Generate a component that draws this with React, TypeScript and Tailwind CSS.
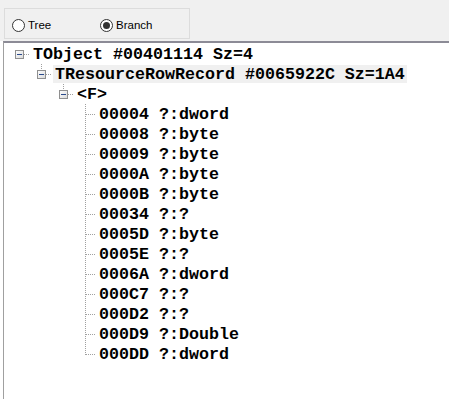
type Row = { text: string; level: number; last: boolean; box?: boolean; selected?: boolean }

const rows: Row[] = [
  { text: 'TObject #00401114 Sz=4', level: 0, last: true, box: true },
  { text: 'TResourceRowRecord #0065922C Sz=1A4', level: 1, last: true, box: true, selected: true },
  { text: '<F>', level: 2, last: true, box: true },
  { text: '00004 ?:dword', level: 3, last: false },
  { text: '00008 ?:byte', level: 3, last: false },
  { text: '00009 ?:byte', level: 3, last: false },
  { text: '0000A ?:byte', level: 3, last: false },
  { text: '0000B ?:byte', level: 3, last: false },
  { text: '00034 ?:?', level: 3, last: false },
  { text: '0005D ?:byte', level: 3, last: false },
  { text: '0005E ?:?', level: 3, last: false },
  { text: '0006A ?:dword', level: 3, last: false },
  { text: '000C7 ?:?', level: 3, last: false },
  { text: '000D2 ?:?', level: 3, last: false },
  { text: '000D9 ?:Double', level: 3, last: false },
  { text: '000DD ?:dword', level: 3, last: true },
]

const dot = '#a0a0a0'

function Connector({ row }: { row: Row }) {
  // 22x20 cell, centre at x=11, y=10
  const hasParent = row.level > 0
  return (
    <svg width="22" height="20" viewBox="0 0 22 20" className="block shrink-0" shapeRendering="crispEdges">
      {hasParent && (
        <line x1="11.5" y1="0" x2="11.5" y2={row.box ? 6 : row.last ? 11 : 20} stroke={dot} strokeDasharray="1 1" />
      )}
      {!row.last && row.box && <line x1="11.5" y1="15" x2="11.5" y2="20" stroke={dot} strokeDasharray="1 1" />}
      <line x1={row.box ? 16 : 12} y1="10.5" x2="22" y2="10.5" stroke={dot} strokeDasharray="1 1" />
      {row.box && (
        <>
          <defs>
            <linearGradient id="bx" x1="0" y1="0" x2="1" y2="1">
              <stop offset="0" stopColor="#ffffff" />
              <stop offset="1" stopColor="#d8d8d8" />
            </linearGradient>
          </defs>
          <rect x="7.5" y="6.5" width="8" height="8" fill="url(#bx)" stroke="#8f8f8f" />
          <line x1="9" y1="10.5" x2="14" y2="10.5" stroke="#2a4a8c" />
        </>
      )}
    </svg>
  )
}

function Radio({ label, checked }: { label: string; checked?: boolean }) {
  return (
    <label className="flex items-center gap-[3px]">
      <svg width="13" height="13" viewBox="0 0 13 13" className="block">
        <circle cx="6.5" cy="6.5" r="6" fill="#ffffff" stroke="#333333" />
        {checked && <circle cx="6.5" cy="6.5" r="3.5" fill="#333333" />}
      </svg>
      <span className="text-[11.5px] leading-[13px] text-black">{label}</span>
    </label>
  )
}

export default function App() {
  return (
    <div className="w-[449px] h-[399px] overflow-hidden bg-white" style={{ fontFamily: '"Liberation Sans", Arial, sans-serif' }}>
      <div className="h-[41px] bg-[#f0f0f0] pt-[8px] pl-[4px]">
        <div className="w-[186px] h-[31px] border border-[#dcdcdc] flex items-center pl-[7px] pt-[4px]">
          <div className="w-[88px]">
            <Radio label="Tree" />
          </div>
          <Radio label="Branch" checked />
        </div>
      </div>
      <div className="ml-[3px] h-[358px] border-l border-t-2 border-l-[#a0a0a0] border-t-[#8c8b96] pl-[4px] pt-[1px]">
        {rows.map((row, i) => (
          <div key={i} className="flex h-[20px] items-center">
            {Array.from({ length: row.level }).map((_, j) => (
              <div key={j} className="w-[22px] shrink-0" />
            ))}
            <Connector row={row} />
            <span
              className={
                'ml-[1px] px-[2px] h-[18px] leading-[19px] whitespace-nowrap text-black font-bold text-[16.67px] ' +
                (row.selected ? 'bg-[#f0f0f0]' : '')
              }
              style={{ fontFamily: '"Liberation Mono", "Courier New", monospace' }}
            >
              {row.text}
            </span>
          </div>
        ))}
      </div>
    </div>
  )
}
